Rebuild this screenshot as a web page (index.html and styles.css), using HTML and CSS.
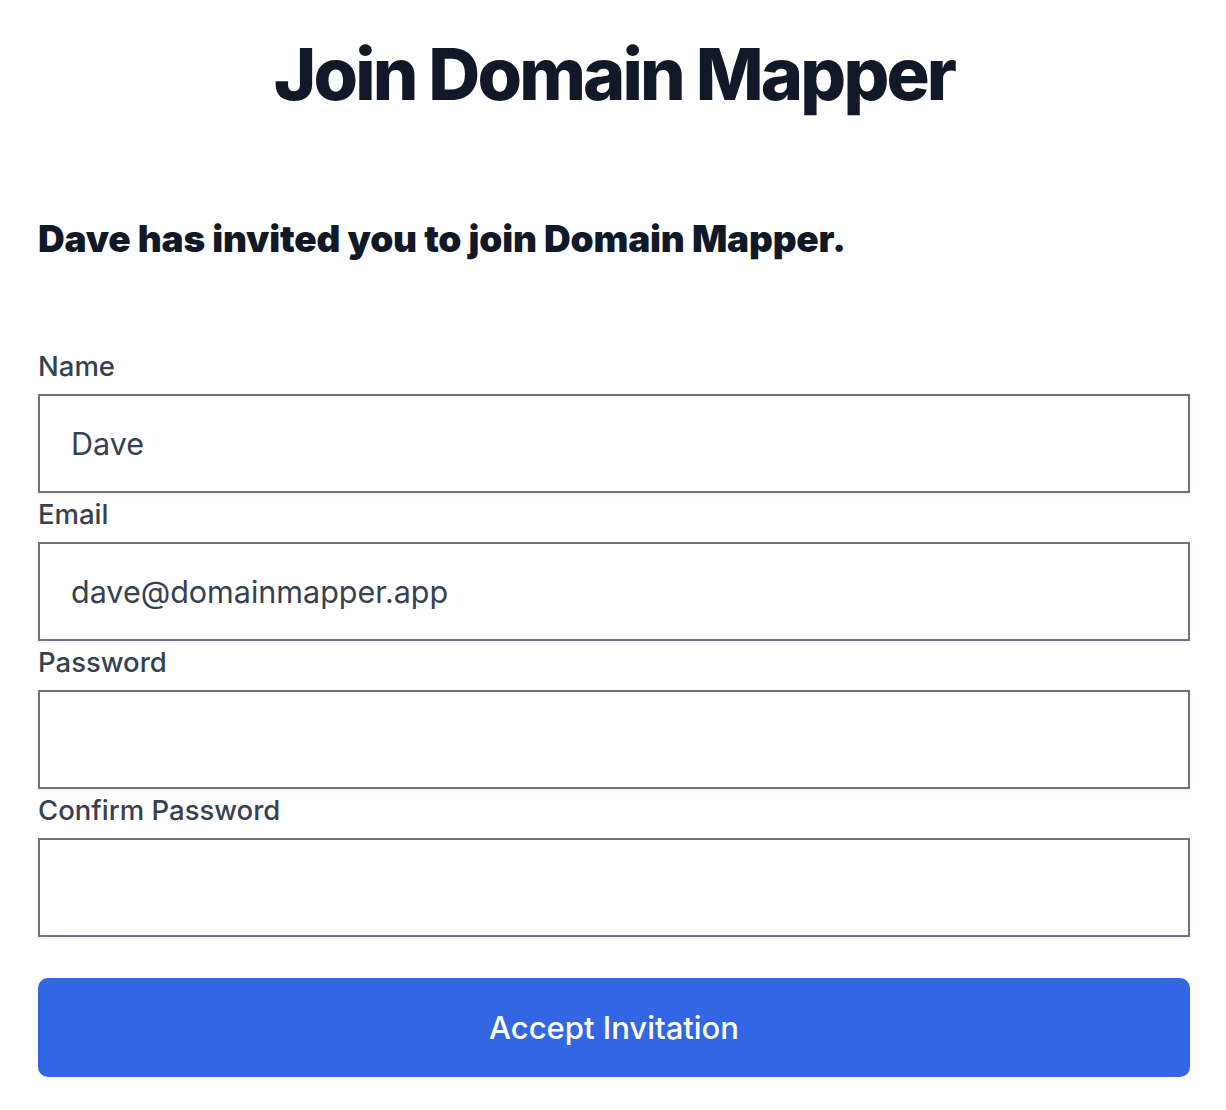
FILE: index.html
```html
<!DOCTYPE html>
<html lang="en">
<head>
<meta charset="utf-8">
<title>Join Domain Mapper</title>
<link rel="stylesheet" href="styles.css">
</head>
<body>
<main class="page">
  <h1 class="title">Join Domain Mapper</h1>
  <p class="invite">Dave has invited you to join Domain Mapper.</p>
  <form class="form">
    <label class="label" for="name">Name</label>
    <input class="field" id="name" type="text" value="Dave">
    <label class="label" for="email">Email</label>
    <input class="field" id="email" type="email" value="dave@domainmapper.app">
    <label class="label" for="pw">Password</label>
    <input class="field" id="pw" type="password">
    <label class="label" for="pw2">Confirm Password</label>
    <input class="field" id="pw2" type="password">
    <button class="submit" type="button">Accept Invitation</button>
  </form>
</main>
</body>
</html>
```
FILE: styles.css
```css
html, body {
  margin: 0;
  padding: 0;
  background: #ffffff;
}
body {
  font-family: Inter, "Noto Sans", sans-serif;
  color: #111827;
}
.page {
  padding: 0 36px 0 38px;
}
.title {
  margin: 38px 0 0;
  font-size: 72px;
  line-height: 1;
  font-weight: 800;
  letter-spacing: -0.04em;
  text-align: center;
  color: #111827;
}
.invite {
  margin: 110px 0 0;
  font-size: 37px;
  line-height: 1;
  font-weight: 900;
  letter-spacing: -0.005em;
  color: #111827;
}
.form {
  display: flex;
  flex-direction: column;
  margin-top: 92px;
}
.label {
  font-size: 27.5px;
  line-height: 34px;
  font-weight: 500;
  color: #374151;
  margin-bottom: 11px;
}
.field {
  box-sizing: border-box;
  height: 99px;
  margin: 0 0 4px;
  padding: 0 31px;
  border: 2px solid #6b7280;
  border-radius: 0;
  font-family: Inter, "Noto Sans", sans-serif;
  font-size: 30.5px;
  color: #374151;
  background: #ffffff;
  box-shadow: 0 2px 3px rgba(0, 0, 0, 0.06);
  outline: none;
}
.submit {
  margin-top: 37px;
  height: 99px;
  border: none;
  border-radius: 10px;
  background: #3366e2;
  color: #ffffff;
  font-family: Inter, "Noto Sans", sans-serif;
  font-size: 31px;
  font-weight: 500;
}
```
